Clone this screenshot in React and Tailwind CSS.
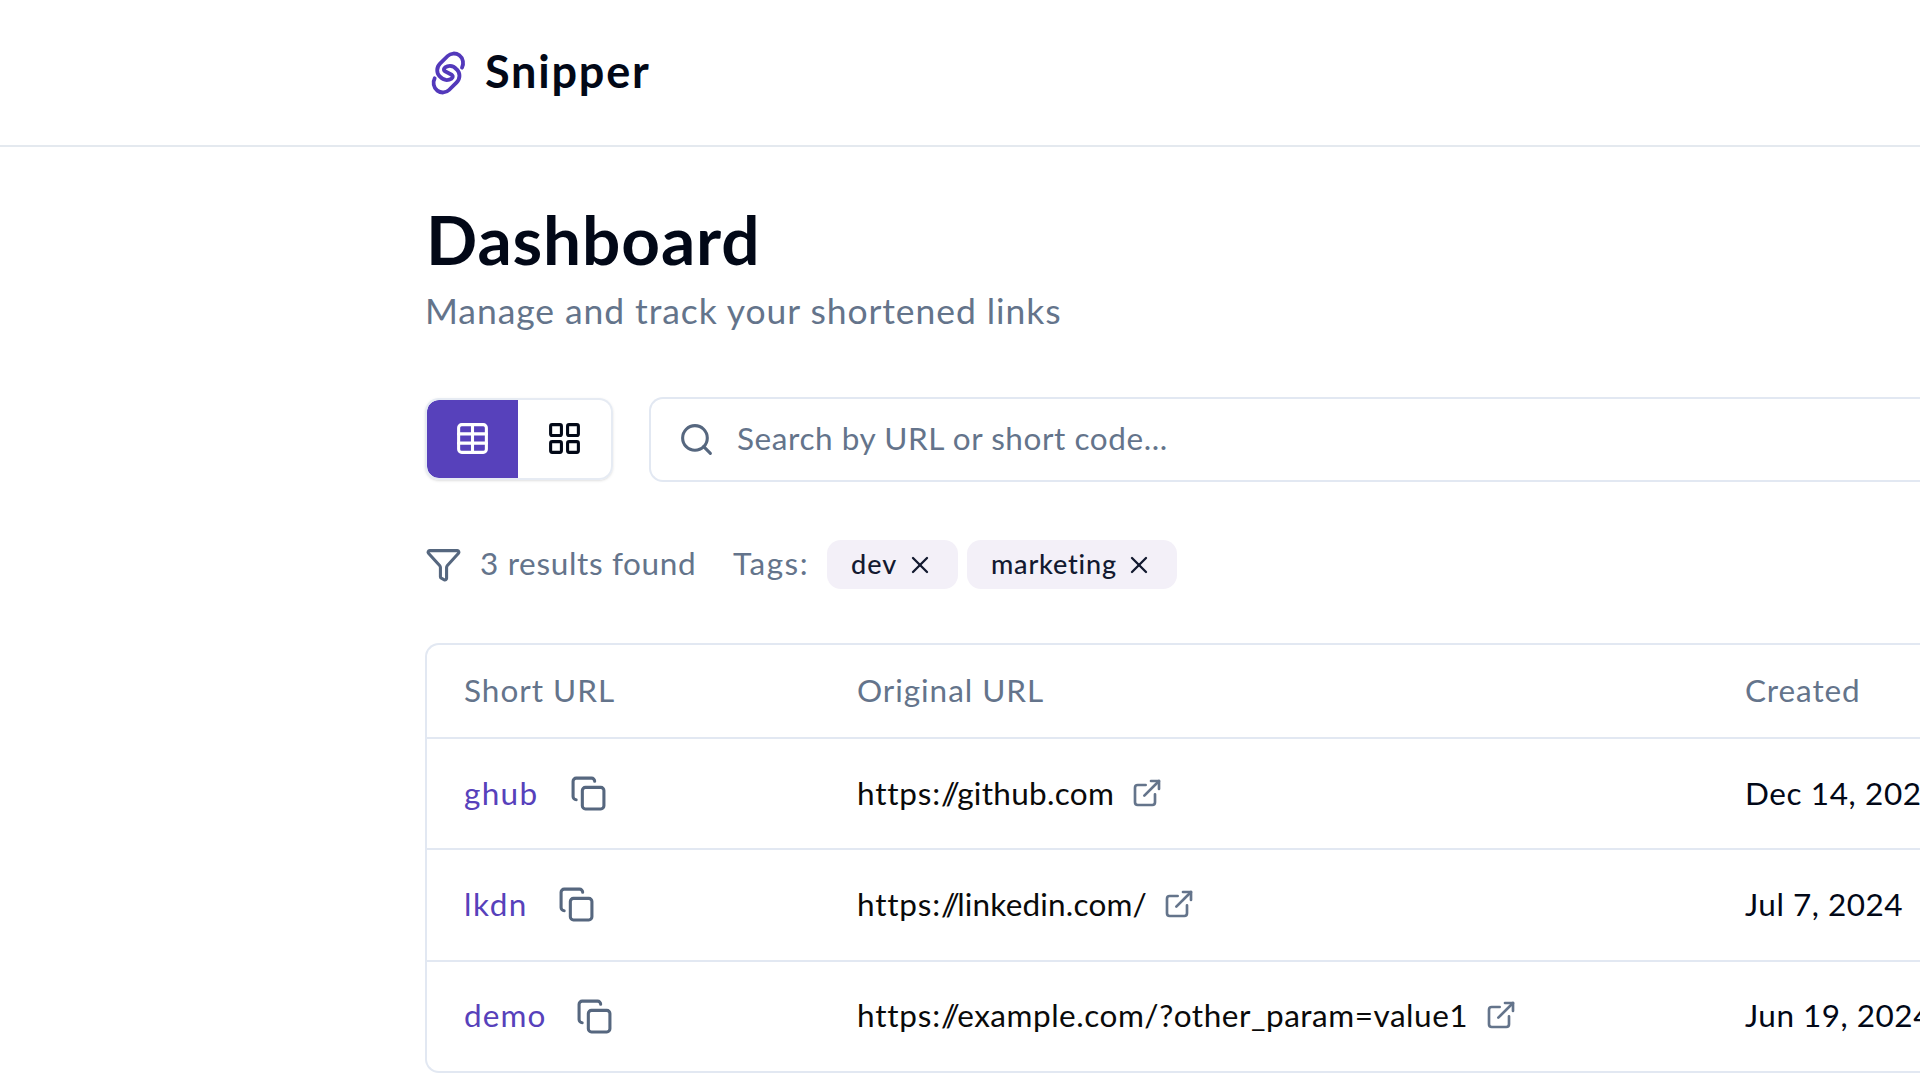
import { Copy, ExternalLink, Funnel, LayoutGrid, Search, Table, X } from "lucide-react";

function Logo() {
  return (
    <svg viewBox="0 0 144 174" className="h-[58px] w-[48px]" fill="none" stroke="#5339bb" strokeWidth="11.5" strokeLinecap="round" strokeLinejoin="round">
      <path d="M114 71C120 60 118 43 106 34C95 26 80 27 71 36L48 59C37 70 37 87 47 97C54 105 66 110 76 107C86 104 89 97 83 92L63 82C57 77 60 70 70 67C80 64 92 69 99 77C109 87 109 104 98 115L75 138C66 147 51 148 40 140C28 131 26 114 32 103" />
    </svg>
  );
}

const rows = [
  {
    code: "ghub",
    codeClass: "w-[106px] tracking-[1.3px]",
    host: "github.com",
    hostClass: "tracking-[0.3px]",
    urlClass: "w-[274px]",
    date: "Dec 14, 2024",
    dateClass: "tracking-[0.6px]",
  },
  {
    code: "lkdn",
    codeClass: "w-[94px] tracking-[1.5px]",
    host: "linkedin.com/",
    hostClass: "tracking-[0.2px]",
    urlClass: "w-[306px]",
    date: "Jul 7, 2024",
    dateClass: "tracking-[0.5px]",
  },
  {
    code: "demo",
    codeClass: "w-[112px] tracking-[1.1px]",
    host: "example.com/?other_param=value1",
    hostClass: "tracking-[0.53px]",
    urlClass: "w-[628px]",
    date: "Jun 19, 2024",
    dateClass: "tracking-[0.5px]",
  },
];

function Tag({ children, className }) {
  return (
    <span className={"flex h-[49px] items-center justify-between rounded-[14px] bg-[#f3f0f8] pl-[24px] pr-[24px] text-[27px] font-medium text-[#131a30] " + className}>
      <span className="-mt-[2px]">{children}</span>
      <X className="size-[28px]" strokeWidth={2} />
    </span>
  );
}

export default function App() {
  return (
    <div className="h-screen w-full overflow-hidden bg-white font-[Lato,sans-serif] text-[31.5px] leading-none text-[#020817]">
      <header className="flex h-[147px] items-center border-b-2 border-[#e4e9ef] pl-[424px]">
        <Logo />
        <span className="ml-[13px] -mt-[3px] text-[45px] font-bold tracking-[1.8px]">Snipper</span>
      </header>

      <main className="pl-[425px]">
        <h1 className="pt-[58px] pl-px text-[67.5px] font-bold leading-[67px] tracking-[0.9px]">Dashboard</h1>
        <p className="mt-[17px] text-[35.5px] leading-[44px] tracking-[0.92px] text-[#64748b]">Manage and track your shortened links</p>

        <div className="mt-[64px] flex items-center gap-[36px]">
          <div className="-mt-[2px] flex h-[82px] w-[188px] rounded-[14px] shadow-sm">
            <button className="flex w-[93px] items-center justify-center rounded-l-[14px] border-2 border-r-0 border-[#e6ebf3] bg-[#5741bb] bg-clip-padding pr-px text-white">
              <Table className="size-[37px]" strokeWidth={2} />
            </button>
            <button className="flex flex-1 items-center justify-center rounded-r-[14px] border-2 border-l-0 border-[#e6ebf3]">
              <LayoutGrid className="size-[37px]" strokeWidth={2} />
            </button>
          </div>
          <div className="flex h-[85px] flex-1 items-center rounded-l-[14px] border-2 border-r-0 border-[#e2e8f2] pl-[27px] text-[#64748b]">
            <Search className="size-[37px] text-[#56677f]" strokeWidth={2} />
            <span className="ml-[22px] -mt-[2px] tracking-[0.57px]">Search by URL or short code...</span>
          </div>
        </div>

        <div className="mt-[58px] flex h-[49px] items-center text-[#64748b]">
          <Funnel className="size-[37px] text-[#56677f]" strokeWidth={2} />
          <span className="ml-[18px] -mt-px w-[253px] tracking-[0.65px]">3 results found</span>
          <span className="-mt-px w-[94px] tracking-[1.5px]">Tags:</span>
          <Tag className="w-[131px] tracking-[1.1px]">dev</Tag>
          <Tag className="ml-[9px] w-[210px] tracking-[0.8px]">marketing</Tag>
        </div>

        <div className="mt-[54px] rounded-l-[14px] border-2 border-r-0 border-[#e2e8f2]">
          <div className="grid h-[94px] grid-cols-[393px_888px_1fr] items-center border-b-2 border-[#e2e8f2] pl-[37px] text-[#64748b]">
            <span className="tracking-[1px]">Short URL</span>
            <span className="tracking-[0.95px]">Original URL</span>
            <span className="tracking-[0.9px]">Created</span>
          </div>
          {rows.map((row) => (
            <div key={row.code} className="grid h-[111.3px] grid-cols-[393px_888px_1fr] items-center border-b-2 border-[#e2e8f2] pl-[37px] last:h-[109px] last:border-b-0">
              <div className="flex items-center">
                <span className={"text-[#5741bb] " + row.codeClass}>{row.code}</span>
                <Copy className="size-[37px] text-[#56677f]" strokeWidth={2} />
              </div>
              <div className="flex items-center text-[#0a0a0a]">
                <span className={"whitespace-nowrap " + row.urlClass}>
                  <span className="tracking-[0.8px]">https:</span>
                  <span className="tracking-[-2.6px]">//</span>
                  <span className={row.hostClass}>{row.host}</span>
                </span>
                <ExternalLink className="-mt-[2px] size-[32px] text-[#64748b]" strokeWidth={2} />
              </div>
              <span className={"whitespace-nowrap " + row.dateClass}>{row.date}</span>
            </div>
          ))}
        </div>
      </main>
    </div>
  );
}
